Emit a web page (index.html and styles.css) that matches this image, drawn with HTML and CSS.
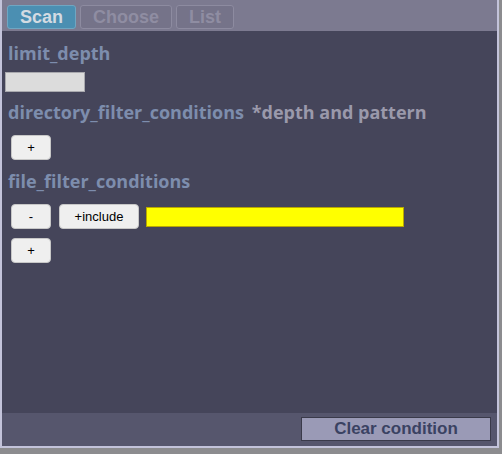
FILE: index.html
```html
<!DOCTYPE html>
<html lang="en">
<head>
  <meta charset="UTF-8">
  <meta name="viewport" content="width=device-width, initial-scale=1.0">
  <title>File Filter</title>
<link rel="stylesheet" href="styles.css">
</head>
<body>
  <div class="app">
    <div class="tabs">
      <button class="tab active">Scan</button>
      <button class="tab">Choose</button>
      <button class="tab">List</button>
    </div>

    <div class="content">
      <h3>limit_depth</h3>
      <input type="text" class="depth">

      <h3>directory_filter_conditions <span class="note">*depth and pattern</span></h3>
      <div class="row">
        <button class="btn">+</button>
      </div>

      <h3>file_filter_conditions</h3>
      <div class="row">
        <button class="btn">-</button>
        <button class="btn wide">+include</button>
        <input type="text" class="pattern">
      </div>
      <div class="row">
        <button class="btn">+</button>
      </div>
    </div>

    <div class="footer">
      <button class="clear">Clear condition</button>
    </div>
  </div>
</body>
</html>
```

FILE: styles.css
```css
body {
  margin: 0;
  background-color: #8c8c8f;
  width: 502px;
  height: 454px;
}

.app {
  width: 499px;
  height: 448px;
  box-sizing: border-box;
  border: 2px solid #c3c3da;
  border-top: none;
  background-color: #45455a;
  display: flex;
  flex-direction: column;
}

.tabs {
  height: 31px;
  box-sizing: border-box;
  background-color: #7c7a90;
  padding: 5px 5px 2px;
  display: flex;
  gap: 4px;
}

.tab {
  font-family: "Liberation Sans", Arial, sans-serif;
  font-weight: bold;
  font-size: 18px;
  line-height: 20px;
  padding: 0 12px;
  background-color: #757389;
  color: #8f8da2;
  border: 1px solid #8d8ba0;
  border-radius: 3px;
}

.tab.active {
  background-color: #4b8fb2;
  color: #d3dbe2;
  border-color: #6fa6c2;
}

.content {
  flex: 1;
  padding: 10px 0 0 3px;
}

.content h3 {
  margin: 0 0 11px 3px;
  font-family: "Open Sans", "Noto Sans", sans-serif;
  font-weight: bold;
  font-size: 18px;
  line-height: 24px;
  color: #7d8dad;
}

.note {
  margin-left: 3px;
  color: #9a99ab;
}

.depth {
  display: block;
  width: 80px;
  height: 20px;
  box-sizing: border-box;
  margin: -4px 0 8px;
  border: 1px solid #a9a9ae;
  background-color: #dcdcdc;
}

.row {
  display: flex;
  align-items: center;
  gap: 8px;
  margin: 0 0 9px 6px;
}

.btn {
  width: 40px;
  height: 25px;
  font-family: "Liberation Sans", Arial, sans-serif;
  font-size: 13px;
  color: #000;
  background-color: #efefef;
  border: 1px solid #c7c7c7;
  border-radius: 4px;
}

.btn.wide {
  width: 80px;
}

.pattern {
  width: 258px;
  height: 20px;
  box-sizing: border-box;
  margin-left: -1px;
  border: 1px solid #b8a800;
  background-color: #ffff00;
}

.footer {
  height: 33px;
  box-sizing: border-box;
  background-color: #56566d;
  display: flex;
  justify-content: flex-end;
  align-items: center;
  padding: 0 6px 2px 0;
}

.clear {
  width: 190px;
  height: 24px;
  font-family: "Liberation Sans", Arial, sans-serif;
  font-weight: bold;
  font-size: 17px;
  color: #3a4262;
  background-color: #9a9ab6;
  border: 1px solid #3a3a4a;
  border-radius: 0;
}
```
